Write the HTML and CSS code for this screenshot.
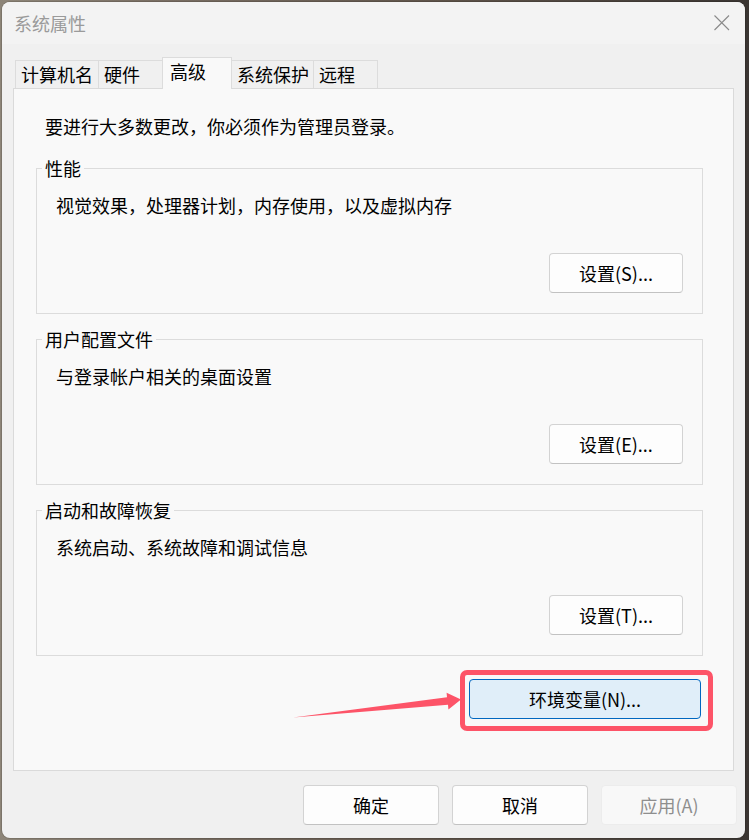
FILE: index.html
```html
<!DOCTYPE html>
<html lang="zh-CN">
<head>
<meta charset="utf-8">
<title>系统属性</title>
<link rel="stylesheet" href="styles.css">
</head>
<body>
<div class="window">
  <div class="titlebar">
    <span class="title">系统属性</span>
    <span class="close">
      <svg width="16" height="16" viewBox="0 0 16 16"><path d="M0.5 0.5 L15 15 M15 0.5 L0.5 15" stroke="#8a8a8a" stroke-width="1.1" fill="none"/></svg>
    </span>
  </div>
  <div class="main">
    <div class="tabs">
      <div class="tab first">计算机名</div>
      <div class="tab">硬件</div>
      <div class="tab active">高级</div>
      <div class="tab">系统保护</div>
      <div class="tab">远程</div>
    </div>
    <div class="panel">
      <div class="intro">要进行大多数更改，你必须作为管理员登录。</div>
      <div class="group">
        <div class="legend">性能</div>
        <div class="desc">视觉效果，处理器计划，内存使用，以及虚拟内存</div>
        <div class="btnrow"><button class="btn">设置(S)...</button></div>
      </div>
      <div class="group">
        <div class="legend">用户配置文件</div>
        <div class="desc">与登录帐户相关的桌面设置</div>
        <div class="btnrow"><button class="btn">设置(E)...</button></div>
      </div>
      <div class="group">
        <div class="legend">启动和故障恢复</div>
        <div class="desc">系统启动、系统故障和调试信息</div>
        <div class="btnrow"><button class="btn">设置(T)...</button></div>
      </div>
      <div class="envrow">
        <div class="highlight"><button class="btn env">环境变量(N)...</button></div>
      </div>
    </div>
    <div class="footer">
      <button class="btn wide">确定</button>
      <button class="btn wide">取消</button>
      <button class="btn wide disabled">应用(A)</button>
    </div>
  </div>
  <svg class="arrow" width="180" height="36" viewBox="0 0 180 36">
    <polygon points="3,29.6 157,9.2 156.6,4.8 171,11.4 158.4,21.4 158,16.8" fill="#fd5468"/>
  </svg>
</div>
</body>
</html>
```
FILE: styles.css
```css
html, body {
  margin: 0;
  padding: 0;
}
body {
  background: linear-gradient(90deg, #8d8578 0%, #7a6f64 20%, #5d5248 60%, #3a3532 100%);
  padding: 2px 0 0 2px;
  height: 840px;
  box-sizing: border-box;
  overflow: hidden;
  font-family: "Noto Sans CJK SC", "Microsoft YaHei", sans-serif;
}
.window {
  position: relative;
  width: 743px;
  height: 836px;
  background: #f0f0f0;
  border-radius: 8px;
  overflow: hidden;
  box-shadow: 0 0 0 1px rgba(0,0,0,0.12);
}
.titlebar {
  height: 42px;
  background: #f3f3f3;
  display: flex;
  align-items: center;
  justify-content: space-between;
  padding-left: 12px;
}
.title {
  font-size: 18px;
  line-height: 24px;
  color: #9a9a9a;
}
.close {
  width: 46px;
  height: 42px;
  display: flex;
  align-items: center;
  justify-content: center;
}
.main {
  padding: 13px 11px 13px 11px;
}
.tabs {
  position: relative;
  z-index: 1;
  display: flex;
  align-items: flex-end;
  height: 32px;
  margin-bottom: -1px;
  padding-left: 3px;
}
.tab {
  box-sizing: border-box;
  height: 28px;
  margin-bottom: 1px;
  min-width: 65px;
  padding: 0 4px 0 5px;
  margin-left: -1px;
  border: 1px solid #dcdcdc;
  border-bottom: none;
  background: #f0f0f0;
  font-size: 18px;
  line-height: 26px;
  color: #000;
}
.tab.first {
  min-width: 84px;
}
.tab.active {
  height: 32px;
  margin-bottom: 0;
  min-width: 70px;
  padding-left: 7px;
  background: #f9f9f9;
  line-height: 26px;
}
.panel {
  box-sizing: border-box;
  width: 721px;
  height: 683px;
  background: #f9f9f9;
  border: 1px solid #dadada;
  padding: 25px 30px 0 22px;
}
.intro {
  font-size: 18px;
  line-height: 24px;
  margin-left: 9px;
  color: #000;
}
.group {
  border: 1px solid #dcdcdc;
  margin-top: 25px;
  padding: 0 19px 20px 19px;
}
.intro + .group {
  margin-top: 30px;
}
.legend {
  width: fit-content;
  margin-top: -13px;
  margin-left: -14px;
  padding: 0 3px;
  background: #f9f9f9;
  font-size: 18px;
  line-height: 24px;
  color: #000;
}
.desc {
  margin-top: 13px;
  font-size: 18px;
  line-height: 24px;
  color: #000;
}
.btnrow {
  display: flex;
  justify-content: flex-end;
  margin-top: 36px;
}
.btn {
  box-sizing: border-box;
  width: 134px;
  height: 40px;
  padding: 0;
  background: #fdfdfd;
  border: 1px solid #d3d3d3;
  border-bottom-color: #c2c2c2;
  border-radius: 4px;
  font-family: "Noto Sans CJK SC", "Microsoft YaHei", sans-serif;
  font-size: 18px;
  line-height: 24px;
  color: #000;
}
.envrow {
  display: flex;
  justify-content: flex-end;
  margin-top: 14px;
  margin-right: -10px;
}
.highlight {
  border: 5px solid #fd5468;
  border-radius: 7px;
  padding: 4px 7px 7px 4px;
}
.btn.env {
  width: 232px;
  background: #e0eef9;
  border: 1px solid #0067c0;
}
.footer {
  display: flex;
  justify-content: flex-end;
  gap: 13px;
  margin-top: 14px;
  margin-right: -3px;
}
.btn.wide {
  width: 136px;
}
.btn.disabled {
  background: #f8f8f8;
  border-color: #ececec;
  color: #8e8e8e;
}
.arrow {
  position: absolute;
  left: 288px;
  top: 686px;
}
```
